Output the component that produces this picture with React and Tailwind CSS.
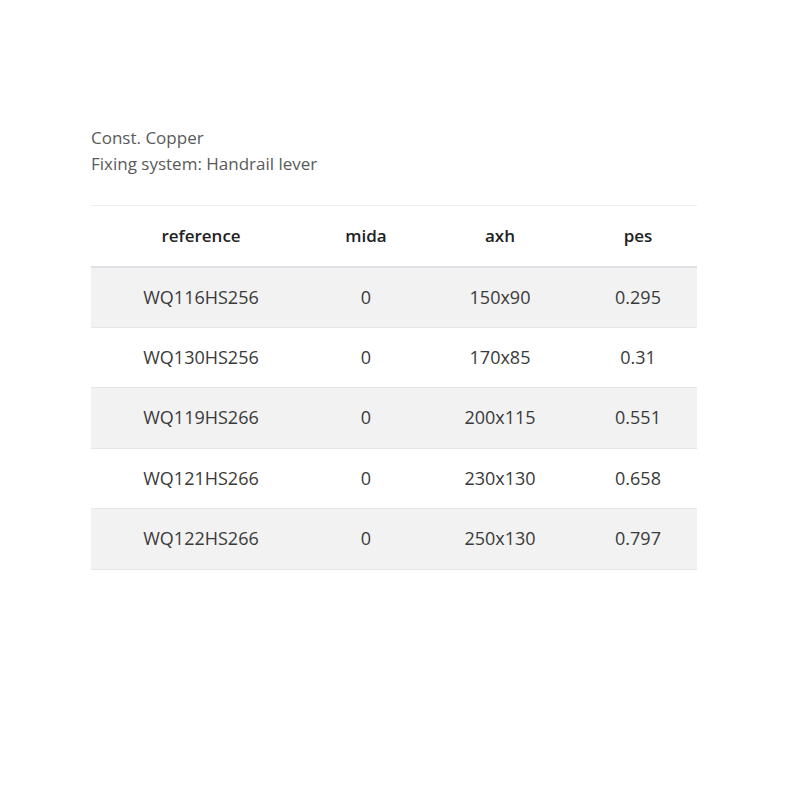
import React from "react";

const rows = [
  ["WQ116HS256", "0", "150x90", "0.295"],
  ["WQ130HS256", "0", "170x85", "0.31"],
  ["WQ119HS266", "0", "200x115", "0.551"],
  ["WQ121HS266", "0", "230x130", "0.658"],
  ["WQ122HS266", "0", "250x130", "0.797"],
];

export default function App() {
  return (
    <div
      className="min-h-screen bg-white pl-[91px] pt-[125px]"
      style={{ fontFamily: '"Open Sans", "Noto Sans", sans-serif' }}
    >
      {/* descripció */}
      <div className="text-[17px] leading-[26px] text-[#5a5a5a]">
        <p>Const. Copper</p>
        <p>Fixing system: Handrail lever</p>
      </div>

      {/* taula */}
      <table className="mt-[28px] w-[606px] border-collapse text-center">
        <thead>
          <tr className="border-t border-[#ececec] border-b-2 border-b-[#dee2e6] text-[17px]">
            <th className="w-[220px] h-[61px] font-semibold text-[#222]">reference</th>
            <th className="w-[110px] font-semibold text-[#222]">mida</th>
            <th className="w-[158px] font-semibold text-[#222]">axh</th>
            <th className="w-[118px] font-semibold text-[#222]">pes</th>
          </tr>
        </thead>
        <tbody className="text-[18px]">
          {rows.map((r, i) => (
            <tr
              key={r[0]}
              className={
                i % 2 === 0
                  ? "bg-[#f2f2f2] border-b border-[#e6e6e6]"
                  : "bg-white border-b border-[#e6e6e6]"
              }
            >
              {r.map((c, j) => (
                <td key={j} className="h-[60.5px] text-[#3a3a3a]">
                  {c}
                </td>
              ))}
            </tr>
          ))}
        </tbody>
      </table>
    </div>
  );
}
